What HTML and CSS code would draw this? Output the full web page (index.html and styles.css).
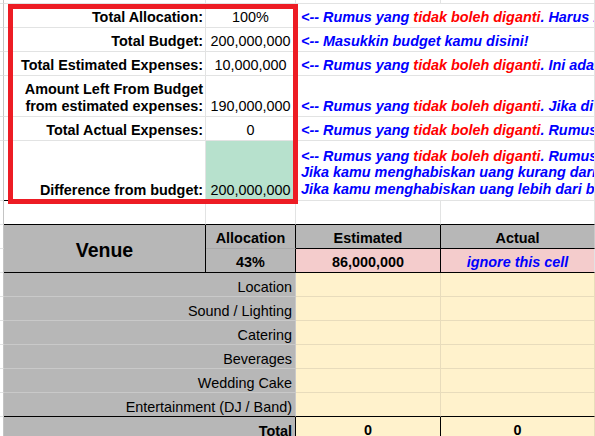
FILE: index.html
```html
<!DOCTYPE html>
<html>
<head>
<meta charset="utf-8">
<link rel="stylesheet" href="styles.css">
</head>
<body>
<div class="sheet">
  <!-- row 0 -->
  <div class="cell cola"></div><div class="cell"></div><div class="cell"></div><div class="cell"></div><div class="cell"></div>

  <!-- row 1 -->
  <div class="cell cola"></div>
  <div class="cell label">Total Allocation:</div>
  <div class="cell val">100%</div>
  <div class="cell note"><span>&lt;-- Rumus yang <em class="red">tidak boleh diganti</em>. Harus 100%, jangan diubah ya!</span></div>

  <!-- row 2 -->
  <div class="cell cola"></div>
  <div class="cell label">Total Budget:</div>
  <div class="cell val">200,000,000</div>
  <div class="cell note"><span>&lt;-- Masukkin budget kamu disini!</span></div>

  <!-- row 3 -->
  <div class="cell cola"></div>
  <div class="cell label">Total Estimated Expenses:</div>
  <div class="cell val">10,000,000</div>
  <div class="cell note"><span>&lt;-- Rumus yang <em class="red">tidak boleh diganti</em>. Ini adalah total estimasi pengeluaran kamu.</span></div>

  <!-- row 4 -->
  <div class="cell cola"></div>
  <div class="cell label"><div>Amount Left From Budget<br>from estimated expenses:</div></div>
  <div class="cell val">190,000,000</div>
  <div class="cell note"><span>&lt;-- Rumus yang <em class="red">tidak boleh diganti</em>. Jika di bawah nol, kamu melebihi budget.</span></div>

  <!-- row 5 -->
  <div class="cell cola"></div>
  <div class="cell label">Total Actual Expenses:</div>
  <div class="cell val">0</div>
  <div class="cell note"><span>&lt;-- Rumus yang <em class="red">tidak boleh diganti</em>. Rumus ini menjumlahkan pengeluaran aktual.</span></div>

  <!-- row 6 -->
  <div class="cell cola"></div>
  <div class="cell label bb-black">Difference from budget:</div>
  <div class="cell val green bb-black">200,000,000</div>
  <div class="cell note multi"><div>&lt;-- Rumus yang <em class="red">tidak boleh diganti</em>. Rumus ini menghitung sisa budget kamu.<br>Jika kamu menghabiskan uang kurang dari budget, angkanya positif.<br>Jika kamu menghabiskan uang lebih dari budget, angkanya negatif.</div></div>

  <!-- row 7 -->
  <div class="cell cola"></div>
  <div class="cell bb-black"></div><div class="cell bb-black"></div><div class="cell bb-black"></div><div class="cell bb-black"></div>

  <!-- row 8 -->
  <div class="cell cola"></div>
  <div class="cell venue gray br-black bb-black">Venue</div>
  <div class="cell val head gray br-black bb-soft">Allocation</div>
  <div class="cell val head gray br-black bb-black">Estimated</div>
  <div class="cell val head gray bb-black">Actual</div>

  <!-- row 9 -->
  <div class="cell cola"></div>
  <div class="cell val head gray br-black bb-black">43%</div>
  <div class="cell val head pink br-black bb-black">86,000,000</div>
  <div class="cell val head pink bb-black"><span class="blue-it">ignore this cell</span></div>

  <!-- items -->
  <div class="cell cola"></div>
  <div class="cell item gray">Location</div>
  <div class="cell cream"></div><div class="cell cream"></div>

  <div class="cell cola"></div>
  <div class="cell item gray">Sound / Lighting</div>
  <div class="cell cream"></div><div class="cell cream"></div>

  <div class="cell cola"></div>
  <div class="cell item gray">Catering</div>
  <div class="cell cream"></div><div class="cell cream"></div>

  <div class="cell cola"></div>
  <div class="cell item gray">Beverages</div>
  <div class="cell cream"></div><div class="cell cream"></div>

  <div class="cell cola"></div>
  <div class="cell item gray">Wedding Cake</div>
  <div class="cell cream"></div><div class="cell cream"></div>

  <div class="cell cola"></div>
  <div class="cell item gray bb-black">Entertainment (DJ / Band)</div>
  <div class="cell cream bb-black"></div><div class="cell cream bb-black"></div>

  <!-- total -->
  <div class="cell cola"></div>
  <div class="cell item gray bold br-black">Total</div>
  <div class="cell val head cream br-black">0</div>
  <div class="cell val head cream">0</div>
</div>
<div class="redbox"></div>
</body>
</html>
```

FILE: styles.css
```css
html, body {
  margin: 0;
  padding: 0;
  background: #ffffff;
  overflow: hidden;
}

body {
  width: 595px;
  height: 436px;
  position: relative;
  font-family: "Liberation Sans", Arial, sans-serif;
  font-size: 14.4px;
  color: #000000;
}

.sheet {
  display: grid;
  grid-template-columns: 4px 202px 90px 145px 154px;
  grid-template-rows: 4px 24px 24px 24px 41px 24px 60px 24px 24px 24px repeat(6, 24px) 24px;
}

.cell {
  box-sizing: border-box;
  border-right: 1px solid #e2e3e3;
  border-bottom: 1px solid #e2e3e3;
  display: flex;
  align-items: flex-end;
  padding: 0 3px 2px 3px;
  line-height: 16.5px;
  white-space: nowrap;
  overflow: hidden;
  min-width: 0;
}

.cola {
  padding: 0;
  border-right-color: #c4c4c4;
}

.label {
  justify-content: flex-end;
  text-align: right;
  font-weight: bold;
  padding-right: 2px;
}

.val {
  justify-content: center;
  text-align: center;
}

.head {
  font-weight: bold;
}

.note {
  grid-column: span 2;
  font-weight: bold;
  font-style: italic;
  color: #0000ff;
  padding-left: 5px;
}

.multi {
  line-height: 16.8px;
  padding-bottom: 2px;
}

.note em,
.blue-it {
  font-style: italic;
}

.red {
  color: #ff0000;
}

.blue-it {
  color: #0000ff;
}

.green {
  background: #b7e1cd;
}

.gray {
  background: #b7b7b7;
  border-bottom-color: #c9c9c9;
  border-right-color: #c9c9c9;
}

.pink {
  background: #f4cccc;
}

.cream {
  background: #fff2cc;
  border-bottom-color: #e8dcbc;
  border-right-color: #e8dcbc;
}

.venue {
  grid-row: span 2;
  align-items: center;
  justify-content: center;
  font-weight: bold;
  font-size: 19.5px;
  padding: 4px 0 0 0;
}

.item {
  grid-column: span 2;
  justify-content: flex-end;
  padding-right: 3px;
  padding-bottom: 1px;
}

.bold {
  font-weight: bold;
}

.bb-black {
  border-bottom-color: #000000;
}

.br-black {
  border-right-color: #000000;
}

.bb-soft {
  border-bottom-color: #a9a9a9;
}

.redbox {
  position: absolute;
  left: 8px;
  top: 4px;
  width: 290px;
  height: 200px;
  box-sizing: border-box;
  border: 5px solid #ed1c24;
}
```
